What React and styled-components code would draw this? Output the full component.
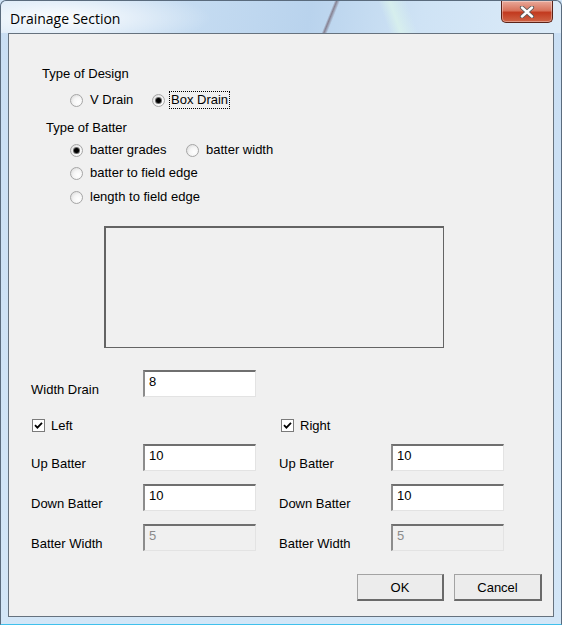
import React from 'react'
import styled, { createGlobalStyle, css } from "styled-components";

const GlobalStyle = createGlobalStyle`
body {
  margin: 0;
  overflow: hidden;
  background: #cfe3f6;
}
`;

const Window = styled.div`
width: 562px;
height: 625px;
box-sizing: border-box;
display: flex;
flex-direction: column;
border: 1px solid #5a6b7d;
border-bottom: 1px solid #3fc0ec;
border-radius: 6px 6px 0 0;
background: linear-gradient(to bottom, #c9def3, #d3e6f7);
`;

const TitleBar = styled.div`
height: 32px;
flex: none;
display: flex;
justify-content: space-between;
align-items: flex-start;
border-radius: 6px 6px 0 0;
background:
  radial-gradient(ellipse 150px 30px at 60px 17px, rgba(255,255,255,0.95), rgba(255,255,255,0)),
  linear-gradient(112deg, transparent 58.2%, rgba(90,60,70,0.55) 58.6%, transparent 59.2%),
  linear-gradient(70deg, transparent 68%, rgba(220,245,235,0.7) 70%, transparent 73%),
  linear-gradient(100deg, #d3e5f6 0%, #c4dbf1 35%, #b9d3ed 55%, #cfe3f5 75%, #dcebf8 100%);
`;

const Title = styled.span`
font-family: "Open Sans", "Noto Sans", sans-serif;
font-size: 14px;
color: #000;
padding: 8px 0 0 9px;
`;

const CloseButton = styled.div`
width: 52px;
height: 22px;
margin-right: 8px;
box-sizing: border-box;
display: flex;
align-items: center;
justify-content: center;
border: 1px solid #5b2318;
border-top: none;
border-radius: 0 0 5px 5px;
background: linear-gradient(to bottom, #e9a99a 0%, #d8735c 45%, #c23a1f 55%, #d06446 100%);
box-shadow: inset 0 0 0 1px rgba(255,255,255,0.35);
`;

const Client = styled.div`
flex: 1;
margin: 0 7px 7px 7px;
border: 1px solid #66727e;
background: #f0f0f0;
display: flex;
flex-direction: column;
font-family: "Liberation Sans", Arial, sans-serif;
font-size: 13px;
color: #000;
padding-top: 31px;
`;

const Line = styled.div`
height: 16px;
display: flex;
align-items: center;
margin-left: ${p => p.$indent}px;
margin-top: ${p => p.$gap || 0}px;
`;

const Option = styled.div`
display: flex;
align-items: center;
gap: 7px;
width: ${p => (p.$width ? `${p.$width}px` : "auto")};
`;

const RadioMark = styled.span`
width: 13px;
height: 13px;
box-sizing: border-box;
border-radius: 50%;
flex: none;
position: relative;
border: 1px solid #a6a6a6;
background: radial-gradient(circle at 65% 65%, #ffffff 0%, #f5f5f5 45%, #d3d3d3 100%);
${p => p.$checked && css`
  &::after {
    content: "";
    position: absolute;
    left: 3px;
    top: 3px;
    width: 5px;
    height: 5px;
    border-radius: 50%;
    background: #000;
    box-shadow: 0 0 0 1px #6a6a6a;
  }
`}
`;

const OptionText = styled.span`
line-height: 16px;
${p => p.$focus && css`
  outline: 1px dotted #000;
  outline-offset: 0;
  padding: 0 1px;
  margin-left: -2px;
`}
`;

const Picture = styled.div`
width: 340px;
height: 122px;
box-sizing: border-box;
margin: 21px 0 0 95px;
border: 1px solid #646464;
border-top-width: 2px;
border-left-width: 2px;
`;

const Lower = styled.div`
display: flex;
flex-direction: column;
margin: 22px 0 0 22px;
`;

const Pair = styled.div`
display: grid;
grid-template-columns: 248px auto;
margin-top: ${p => p.$gap || 0}px;
`;

const Field = styled.div`
display: flex;
align-items: flex-start;
height: 27px;
`;

const FieldLabel = styled.span`
width: 112px;
line-height: 16px;
padding-top: 12px;
`;

const TextBox = styled.div`
width: 113px;
height: 27px;
box-sizing: border-box;
border-style: solid;
border-width: 2px 1px 1px 2px;
border-color: #6f6f6f #e3e3e3 #e3e3e3 #8c8c8c;
background: ${p => (p.$disabled ? "#f0f0f0" : "#fff")};
color: ${p => (p.$disabled ? "#8a8a8a" : "#000")};
padding: 2px 4px;
line-height: 16px;
`;

const Check = styled.div`
height: 16px;
display: flex;
align-items: center;
gap: 6px;
margin-left: ${p => p.$shift || 0}px;
`;

const CheckBox = styled.span`
width: 13px;
height: 13px;
box-sizing: border-box;
flex: none;
display: flex;
align-items: center;
justify-content: center;
border: 1px solid #7a7a7a;
background: #fff;
`;

const Buttons = styled.div`
display: flex;
justify-content: flex-end;
gap: 10px;
margin-top: 23px;
padding-right: 11px;
`;

const Button = styled.div`
width: ${p => p.$width}px;
height: 27px;
box-sizing: border-box;
display: flex;
align-items: center;
justify-content: center;
border-style: solid;
border-width: 1px 2px 2px 1px;
border-color: #a3a3a3 #6a6a6a #6a6a6a #a3a3a3;
background: #ececec;
`;

const Radio = ({ checked, width, focus, children }) => (
  <Option $width={width}>
    <RadioMark $checked={checked} />
    <OptionText $focus={focus}>{children}</OptionText>
  </Option>
);

const CheckItem = ({ shift, children }) => (
  <Check $shift={shift}>
    <CheckBox>
      <svg width="9" height="9" viewBox="0 0 9 9">
        <path d="M1 4.2 L3.4 6.6 L8 1.8" fill="none" stroke="#000" strokeWidth="1.8" />
      </svg>
    </CheckBox>
    <span>{children}</span>
  </Check>
);

const InputField = ({ label, value, disabled }) => (
  <Field>
    <FieldLabel>{label}</FieldLabel>
    <TextBox $disabled={disabled}>{value}</TextBox>
  </Field>
);

const App = () => {
  return (
    <Window>
      <GlobalStyle />
      <TitleBar>
        <Title>Drainage Section</Title>
        <CloseButton>
          <svg width="16" height="12" viewBox="0 0 16 12">
            <path d="M3 1.5 L13 10.5 M13 1.5 L3 10.5" stroke="#5a5a5a" strokeWidth="4.2" strokeLinecap="round" />
            <path d="M3 1.5 L13 10.5 M13 1.5 L3 10.5" stroke="#fff" strokeWidth="2.4" strokeLinecap="round" />
          </svg>
        </CloseButton>
      </TitleBar>
      <Client>
        <Line $indent={33}>Type of Design</Line>
        <Line $indent={61} $gap={11}>
          <Radio width={82}>V Drain</Radio>
          <Radio checked focus>Box Drain</Radio>
        </Line>
        <Line $indent={37} $gap={11}>Type of Batter</Line>
        <Line $indent={61} $gap={7}>
          <Radio checked width={116}>batter grades</Radio>
          <Radio>batter width</Radio>
        </Line>
        <Line $indent={61} $gap={7}>
          <Radio>batter to field edge</Radio>
        </Line>
        <Line $indent={61} $gap={8}>
          <Radio>length to field edge</Radio>
        </Line>
        <Picture />
        <Lower>
          <Pair>
            <InputField label="Width Drain" value="8" />
          </Pair>
          <Pair $gap={20}>
            <CheckItem shift={1}>Left</CheckItem>
            <CheckItem shift={2}>Right</CheckItem>
          </Pair>
          <Pair $gap={11}>
            <InputField label="Up Batter" value="10" />
            <InputField label="Up Batter" value="10" />
          </Pair>
          <Pair $gap={13}>
            <InputField label="Down Batter" value="10" />
            <InputField label="Down Batter" value="10" />
          </Pair>
          <Pair $gap={13}>
            <InputField label="Batter Width" value="5" disabled />
            <InputField label="Batter Width" value="5" disabled />
          </Pair>
        </Lower>
        <Buttons>
          <Button $width={87}>OK</Button>
          <Button $width={88}>Cancel</Button>
        </Buttons>
      </Client>
    </Window>
  )
}

export default App
